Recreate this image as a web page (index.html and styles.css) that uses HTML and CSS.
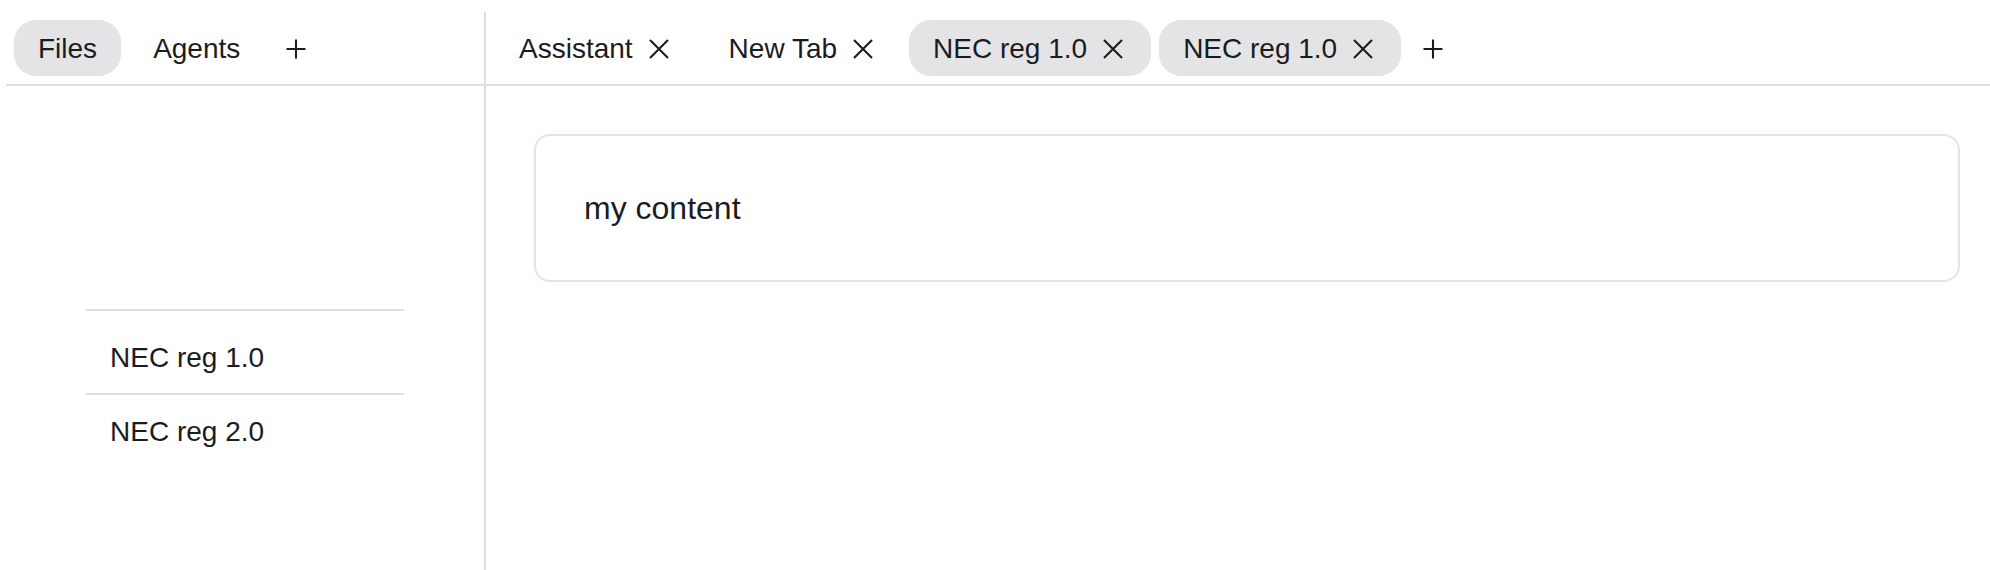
FILE: index.html
```html
<!DOCTYPE html>
<html lang="en">
<head>
<meta charset="utf-8">
<title>Workspace</title>
<link rel="stylesheet" href="styles.css">
</head>
<body>
<div class="app">
  <aside class="side">
    <div class="tabbar">
      <button class="pill active">Files</button>
      <button class="pill">Agents</button>
      <button class="add" aria-label="Add">
        <svg viewBox="0 0 28 28" width="28" height="28"><path d="M14 4.5V23.5M4.5 14H23.5" /></svg>
      </button>
    </div>
    <ul class="filelist">
      <li>NEC reg 1.0</li>
      <li>NEC reg 2.0</li>
    </ul>
  </aside>
  <main class="main">
    <div class="tabbar tabs">
      <div class="pill tab"><span>Assistant</span><span class="close"><svg viewBox="0 0 28 28" width="28" height="28"><path d="M5 5L23 23M23 5L5 23" /></svg></span></div>
      <div class="pill tab"><span>New Tab</span><span class="close"><svg viewBox="0 0 28 28" width="28" height="28"><path d="M5 5L23 23M23 5L5 23" /></svg></span></div>
      <div class="pill tab active"><span>NEC reg 1.0</span><span class="close"><svg viewBox="0 0 28 28" width="28" height="28"><path d="M5 5L23 23M23 5L5 23" /></svg></span></div>
      <div class="pill tab active"><span>NEC reg 1.0</span><span class="close"><svg viewBox="0 0 28 28" width="28" height="28"><path d="M5 5L23 23M23 5L5 23" /></svg></span></div>
      <button class="add" aria-label="New tab">
        <svg viewBox="0 0 28 28" width="28" height="28"><path d="M14 4.5V23.5M4.5 14H23.5" /></svg>
      </button>
    </div>
    <div class="content">
      <div class="card">my content</div>
    </div>
  </main>
</div>
</body>
</html>
```

FILE: styles.css
```css
* { box-sizing: border-box; }

html, body {
  height: 100%;
}

body {
  margin: 0;
  padding: 12px 0 0 6px;
  background: #ffffff;
  color: #1b1c1f;
  font-family: "Liberation Sans", Arial, Helvetica, sans-serif;
  font-size: 28px;
  overflow: hidden;
}

.app {
  display: flex;
  height: 100%;
}

.side {
  width: 480px;
  flex: none;
  border-right: 2px solid #dedede;
  display: flex;
  flex-direction: column;
}

.main {
  flex: 1;
  display: flex;
  flex-direction: column;
  min-width: 0;
}

.tabbar {
  display: flex;
  align-items: center;
  gap: 8px;
  padding: 8px;
  border-bottom: 2px solid #dedede;
}

.tabs {
  padding-left: 9px;
}

.pill {
  display: flex;
  align-items: center;
  height: 56px;
  padding: 2px 24px 0;
  border: none;
  border-radius: 22px;
  background: transparent;
  color: inherit;
  font: inherit;
  line-height: 32px;
  white-space: nowrap;
}

.pill.active {
  background: #e4e4e7;
}

.tab .close {
  display: flex;
  margin-left: 12px;
}

.close svg path,
.add svg path {
  fill: none;
  stroke: #1b1c1f;
  stroke-width: 2.1;
  stroke-linecap: butt;
}

.add {
  display: flex;
  align-items: center;
  justify-content: center;
  height: 56px;
  padding: 2px 10px 0;
  border: none;
  background: transparent;
}

.filelist {
  list-style: none;
  margin: 223px 80px 0;
  padding: 10px 0 0;
  border-top: 2px solid #dedede;
}

.filelist li {
  padding: 20px 24px 18px;
  line-height: 34px;
}

.filelist li + li {
  border-top: 2px solid #dedede;
}

.content {
  padding: 48px 30px 0 48px;
}

.card {
  border: 2px solid #e4e4e7;
  border-radius: 16px;
  padding: 48px;
  font-size: 32px;
  line-height: 48px;
}
```
